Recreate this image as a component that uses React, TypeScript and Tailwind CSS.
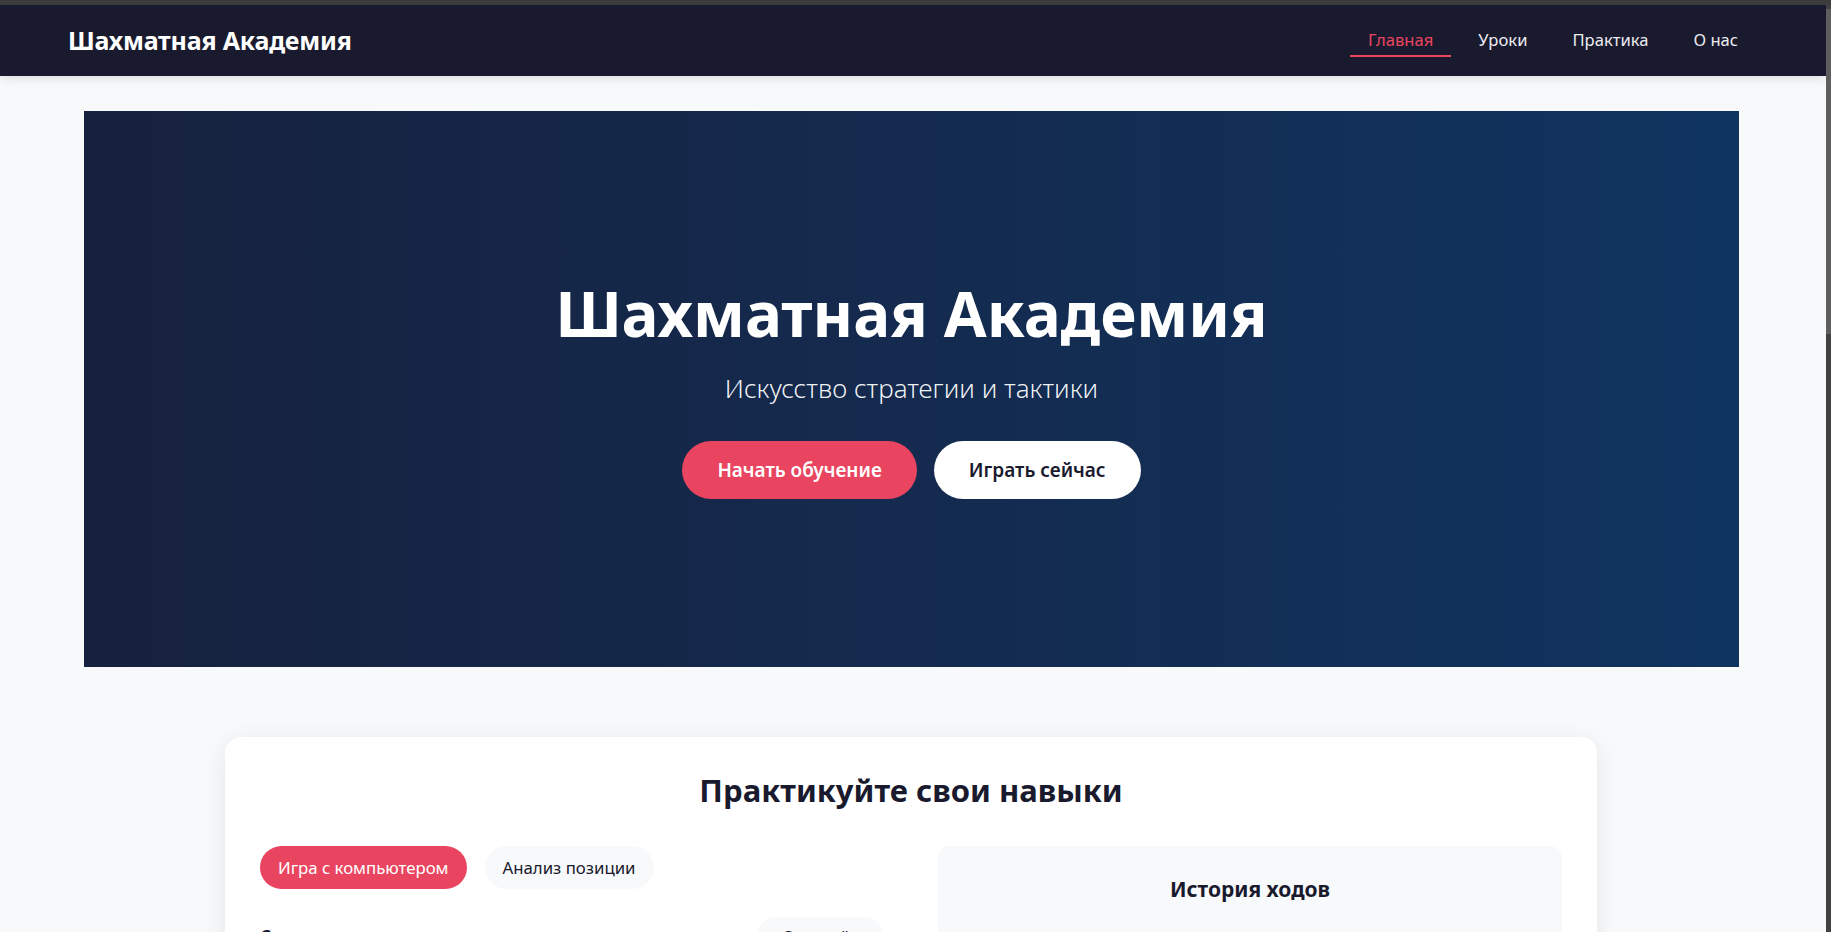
const navLinks = ['Главная', 'Уроки', 'Практика', 'О нас'];

function Header() {
  return (
    <header className="h-[71px] bg-[#1a1a2e] pl-[68px] pr-[70px] flex items-center justify-between shadow-[0_2px_10px_rgba(0,0,0,0.12)] relative z-10">
      <div className="text-white font-bold text-[25px] tracking-[-0.2px]">Шахматная Академия</div>
      <nav className="flex items-center gap-[9px]">
        {navLinks.map((link, i) => (
          <a
            key={link}
            href="#"
            className={
              i === 0
                ? 'px-[18px] pt-[4px] pb-[3px] text-[16.6px] text-[#e94560] border-b-2 border-[#e94560]'
                : 'px-[18px] pt-[4px] pb-[3px] text-[16.6px] text-[#ececf1] border-b-2 border-transparent'
            }
          >
            {link}
          </a>
        ))}
      </nav>
    </header>
  );
}

function Hero() {
  return (
    <section className="ml-[84px] mt-[35px] w-[1655px] h-[556px] bg-gradient-to-r from-[#16213e] to-[#0f3460] flex flex-col items-center pt-[165px]">
      <h1 className="text-white font-bold text-[62px] leading-[1.2]">Шахматная Академия</h1>
      <p className="mt-[19px] text-white/95 font-light text-[26px] leading-[1.5]">Искусство стратегии и тактики</p>
      <div className="mt-[33px] flex gap-[17px]">
        <button className="h-[58px] px-[35px] rounded-full bg-[#e94560] text-white font-semibold text-[19px]">
          Начать обучение
        </button>
        <button className="h-[58px] px-[35px] rounded-full bg-white text-[#1a1a2e] font-semibold text-[19px]">
          Играть сейчас
        </button>
      </div>
    </section>
  );
}

function Practice() {
  return (
    <section className="ml-[225px] mt-[70px] w-[1372px] bg-white rounded-2xl shadow-[0_5px_25px_rgba(0,0,0,0.08)] p-[35px]">
      <h2 className="text-center text-[#1a1a2e] font-bold text-[31px] leading-[1.2] mb-[37px]">
        Практикуйте свои навыки
      </h2>
      <div className="grid grid-cols-2 gap-[54px]">
        <div>
          <div className="flex gap-[18px]">
            <button className="h-[43px] px-[18px] rounded-full bg-[#e94560] text-white text-[16.8px]">
              Игра с компьютером
            </button>
            <button className="h-[43px] px-[18px] rounded-full bg-[#f8f9fa] text-[#1a1a2e] text-[16.8px]">
              Анализ позиции
            </button>
          </div>
          <div className="mt-[28px] flex items-center justify-between">
            <span className="font-bold text-[17px] text-[#1a1a2e]">Сложность:</span>
            <div className="h-[40px] w-[127px] rounded-full bg-[#f8f9fa] flex items-center px-[25px] text-[16px] text-[#1a1a2e]">
              Средний
            </div>
          </div>
        </div>
        <div className="bg-[#f8f9fa] rounded-xl pt-[28px] px-6 pb-6 min-h-[300px]">
          <h3 className="text-center font-bold text-[21px] leading-[1.5] text-[#1a1a2e]">История ходов</h3>
        </div>
      </div>
    </section>
  );
}

export default function App() {
  return (
    <div
      className="h-screen overflow-hidden flex flex-col bg-[#3c3c3c]"
      style={{ fontFamily: '"Noto Sans", "Open Sans", sans-serif' }}
    >
      <div className="h-[5px] shrink-0" />
      <div className="flex-1 flex min-h-0">
        <main className="flex-1 bg-[#f8f9fa] overflow-hidden">
          <Header />
          <Hero />
          <Practice />
          <div className="h-[200px]" />
        </main>
        <div className="w-[5px] bg-[#424242] flex flex-col">
          <div className="mt-[4px] h-[325px] bg-[#5e5e5e]" />
        </div>
      </div>
    </div>
  );
}
